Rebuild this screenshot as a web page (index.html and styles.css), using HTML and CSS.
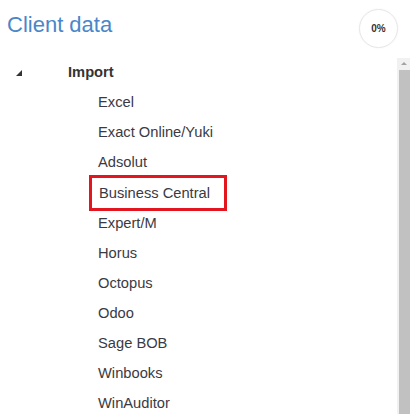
FILE: index.html
```html
<!DOCTYPE html>
<html lang="en">
<head>
    <meta charset="UTF-8">
    <meta name="viewport" content="width=device-width, initial-scale=1.0">
    <title>Client data</title>
    <link rel="stylesheet" href="styles.css">
</head>
<body>
  <div id="page">
    <div class="header">
      <h2 class="title">Client data</h2>
      <div class="progress">0%</div>
    </div>

    <div class="panel">
      <ul class="tree">
        <li class="node">
          <span class="toggle"></span>
          <span class="node-label">Import</span>
        </li>
        <li class="leaf">Excel</li>
        <li class="leaf">Exact Online/Yuki</li>
        <li class="leaf">Adsolut</li>
        <li class="leaf"><span class="marked">Business Central</span></li>
        <li class="leaf">Expert/M</li>
        <li class="leaf">Horus</li>
        <li class="leaf">Octopus</li>
        <li class="leaf">Odoo</li>
        <li class="leaf">Sage BOB</li>
        <li class="leaf">Winbooks</li>
        <li class="leaf">WinAuditor</li>
      </ul>
      <div class="scrollbar">
        <div class="scroll-up"></div>
        <div class="scroll-thumb"></div>
      </div>
    </div>
  </div>
</body>
</html>
```

FILE: styles.css
```css
body {
  margin: 0;
  padding: 0;
  font-family: "Liberation Sans", Arial, sans-serif;
  background-color: #fff;
  color: #333;
}

#page {
  width: 410px;
  height: 414px;
  overflow: hidden;
}

.header {
  display: flex;
  justify-content: space-between;
  align-items: flex-start;
  height: 57px;
}

.title {
  margin: 12px 0 0 7px;
  font-size: 22px;
  line-height: 26px;
  font-weight: normal;
  color: #4a86c8;
}

.progress {
  margin: 9px 12px 0 0;
  width: 37px;
  height: 37px;
  border: 1px solid #e6e6e6;
  border-radius: 50%;
  box-shadow: 0 0 2px rgba(0, 0, 0, 0.06);
  display: flex;
  justify-content: center;
  align-items: center;
  font-size: 10px;
  font-weight: bold;
  color: #333;
}

.panel {
  display: flex;
  height: 357px;
}

.tree {
  flex: 1;
  list-style: none;
  margin: 0;
  padding: 0;
  font-size: 14.7px;
  line-height: 30px;
}

.node {
  display: flex;
  align-items: center;
}

.toggle {
  width: 0;
  height: 0;
  margin: 1px 46px 0 16px;
  border-style: solid;
  border-width: 0 0 6px 6px;
  border-color: transparent transparent #333 transparent;
}

.node-label {
  font-weight: bold;
  color: #333;
}

.leaf {
  padding-left: 98px;
  color: #3a3a44;
}

.marked {
  display: inline-block;
  margin: -2px 0 -4px -9px;
  padding: 0 14px 0 7px;
  border: 3px solid #e3151f;
}

.scrollbar {
  width: 13px;
  display: flex;
  flex-direction: column;
  background-color: #f1f1f1;
  margin-top: 1px;
}

.scroll-up {
  height: 12px;
  position: relative;
}

.scroll-up::after {
  content: "";
  position: absolute;
  left: 4px;
  top: 4px;
  border-style: solid;
  border-width: 0 3px 3px 3px;
  border-color: transparent transparent #a3a3a3 transparent;
}

.scroll-thumb {
  flex: 1;
  margin-left: 2px;
  background-color: #c1c1c1;
}
```
